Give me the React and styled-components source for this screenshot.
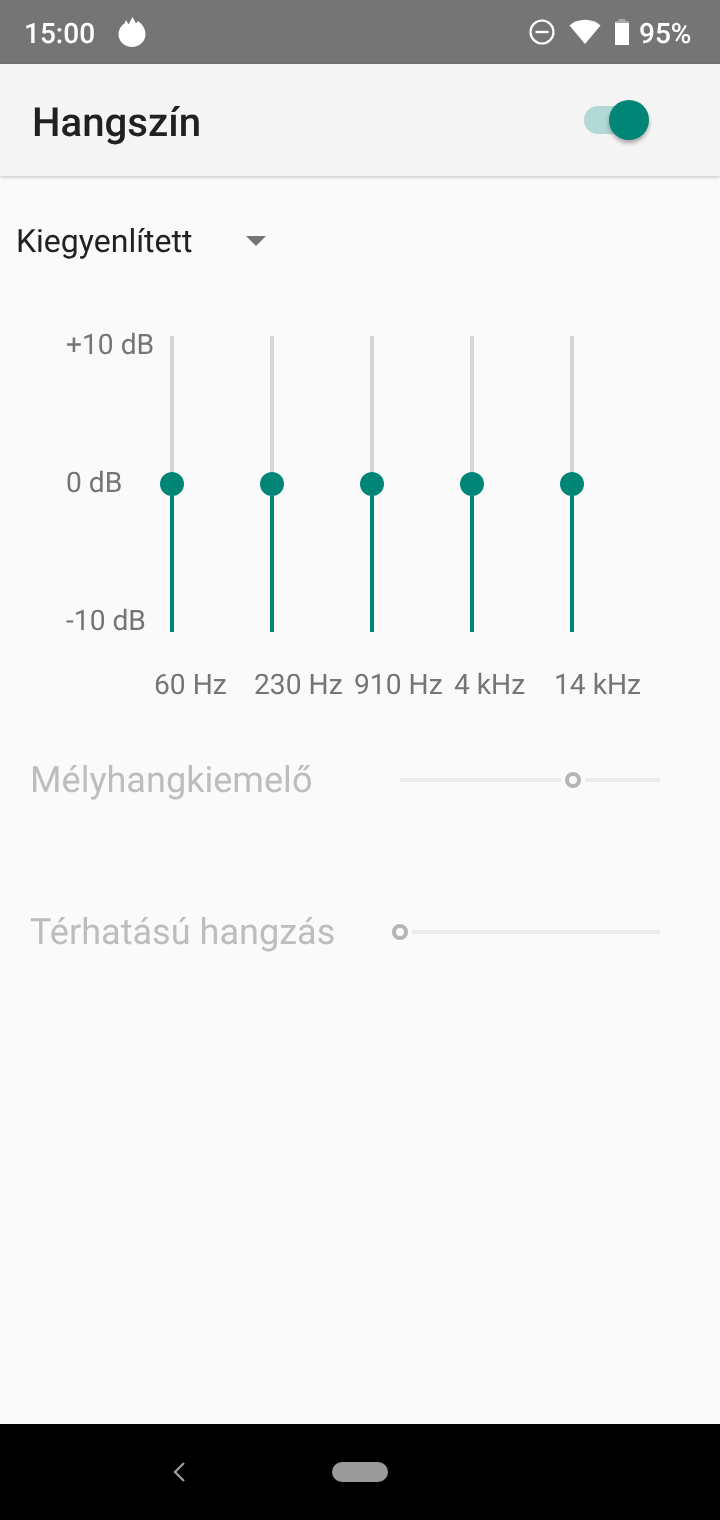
import styled, { createGlobalStyle, css } from "styled-components";

const GlobalStyle = createGlobalStyle`
  html, body {
    margin: 0;
    padding: 0;
    background-color: #fafafa;
    font-family: Roboto, "Noto Sans", sans-serif;
    text-rendering: geometricPrecision;
  }
`;

// the phone renders text in plain grey antialiasing, own layer gets the same here
const plainText = css`
  will-change: transform;
`;

const Screen = styled.div`
  width: 720px;
  height: 1520px;
  display: flex;
  flex-direction: column;
  overflow: hidden;
  background-color: #fafafa;
`;

const StatusBar = styled.div`
  height: 64px;
  flex: none;
  display: flex;
  align-items: center;
  padding: 0 29px 0 24px;
  box-sizing: border-box;
  background-color: #757575;
`;

const StatusLeft = styled.div`
  display: flex;
  align-items: center;
  gap: 23px;
  flex: 1;
`;

const StatusRight = styled.div`
  display: flex;
  align-items: center;
`;

const StatusText = styled.span`
  ${plainText}
  padding-top: 2px;
  color: #ffffff;
  font-size: 28px;
  font-weight: 500;
`;

const Toolbar = styled.div`
  height: 112px;
  flex: none;
  display: flex;
  align-items: center;
  justify-content: space-between;
  padding: 0 71px 0 32px;
  box-sizing: border-box;
  background-color: #f5f5f5;
  box-shadow: 0 1px 4px rgba(0, 0, 0, 0.22);
  z-index: 2;
`;

const Title = styled.div`
  ${plainText}
  margin-top: 5px;
  font-size: 40.2px;
  font-weight: 500;
  color: #212121;
`;

const Switch = styled.div`
  position: relative;
  width: 65px;
  height: 40px;
  display: flex;
  align-items: center;
`;

const SwitchTrack = styled.div`
  width: 56px;
  height: 28px;
  border-radius: 14px;
  background-color: #b2d9d5;
`;

const SwitchThumb = styled.div`
  position: absolute;
  top: 0;
  right: 0;
  width: 40px;
  height: 40px;
  border-radius: 50%;
  background-color: #008577;
  box-shadow: 0 3px 4px rgba(0, 0, 0, 0.32);
`;

const Content = styled.div`
  flex: 1;
  display: flex;
  flex-direction: column;
`;

const Dropdown = styled.div`
  display: flex;
  align-items: center;
  margin-top: 45px;
  padding-left: 16px;
  height: 40px;
`;

const DropdownLabel = styled.div`
  ${plainText}
  width: 230px;
  font-size: 32px;
  color: #212121;
`;

const Caret = styled.div`
  width: 0;
  height: 0;
  border-left: 10px solid transparent;
  border-right: 10px solid transparent;
  border-top: 10px solid #757575;
`;

const Equalizer = styled.div`
  display: flex;
  align-items: flex-start;
  margin-top: 75px;
  height: 296px;
`;

const Scale = styled.div`
  width: 170px;
  height: 306px;
  margin-top: -6px;
  padding-left: 66px;
  box-sizing: border-box;
  display: flex;
  flex-direction: column;
  justify-content: space-between;
`;

const ScaleLabel = styled.div`
  ${plainText}
  height: 30px;
  line-height: 30px;
  font-size: 28.2px;
  color: #757575;
  white-space: nowrap;
`;

const Band = styled.div`
  width: 100px;
  height: 296px;
  display: flex;
  flex-direction: column;
  align-items: flex-start;
`;

const BandTrack = styled.div`
  width: 4px;
  flex: 1;
  background-color: ${(p) => (p.$active ? "#008577" : "#d6d6d6")};
`;

const BandThumb = styled.div`
  width: 24px;
  height: 24px;
  margin-left: -10px;
  border-radius: 50%;
  background-color: #008577;
`;

const FreqRow = styled.div`
  display: flex;
  margin-top: 37px;
  padding-left: 154px;
`;

const Freq = styled.div`
  ${plainText}
  width: 100px;
  height: 32px;
  line-height: 32px;
  font-size: 28.2px;
  color: #757575;
  white-space: nowrap;
`;

const EffectRow = styled.div`
  display: flex;
  align-items: center;
  height: 40px;
  margin-top: ${(p) => p.$top}px;
  padding-left: 30px;
`;

const EffectLabel = styled.div`
  ${plainText}
  width: 370px;
  height: 40px;
  line-height: 40px;
  font-size: 36.1px;
  color: #bdbdbd;
  white-space: nowrap;
`;

const EffectSlider = styled.div`
  width: 260px;
  display: flex;
  align-items: center;
  gap: 4px;
`;

const EffectTrack = styled.div`
  flex: ${(p) => (p.$width ? `0 0 ${p.$width}px` : "1")};
  height: 4px;
  background-color: #ebebeb;
`;

const EffectThumb = styled.div`
  width: 16px;
  height: 16px;
  box-sizing: border-box;
  flex: none;
  border: 4px solid #b5b5b5;
  border-radius: 50%;
  margin-left: ${(p) => (p.$start ? "-8px" : "0")};
`;

const NavBar = styled.div`
  height: 96px;
  flex: none;
  display: flex;
  align-items: center;
  background-color: #000000;
  padding-left: 172px;
`;

const NavHome = styled.div`
  width: 56px;
  height: 20px;
  margin-left: 146px;
  border-radius: 10px;
  background-color: #9b9b9b;
`;

function Flame() {
  return (
    <svg width="28" height="30" viewBox="0 0 28 30">
      <path
        fill="#fff"
        d="M14 30C6.500 30 .5 24.500 .5 17 .5 12.500 3.500 8.500 6.500 6.500L8 3l2.500 4.500L14.500 0 18 6.500 20 4c4 3 7.500 7.500 7.500 13C27.500 24.500 21.500 30 14 30z"
      />
    </svg>
  );
}

function DoNotDisturb() {
  return (
    <svg width="26" height="26" viewBox="0 0 26 26" style={{ marginRight: 14 }}>
      <circle cx="13" cy="13" r="11.500" fill="none" stroke="#fff" strokeWidth="2.200" />
      <rect x="6.500" y="11.800" width="13" height="2.400" fill="#fff" />
    </svg>
  );
}

function Wifi() {
  return (
    <svg width="32" height="26" viewBox="0 0 32 26" style={{ marginRight: 14 }}>
      <path fill="#fff" d="M16 25L0.500 6.500C4.500 3 10 .8 16 .8s11.500 2.200 15.500 5.700z" />
    </svg>
  );
}

function Battery() {
  return (
    <svg width="14" height="26" viewBox="0 0 14 26" style={{ marginRight: 10 }}>
      <rect x="3.500" y="0" width="7" height="3" fill="#a8a8a8" />
      <rect x="0" y="2" width="14" height="3" fill="#a8a8a8" />
      <rect x="0" y="4" width="14" height="22" fill="#fff" />
    </svg>
  );
}

function BackIcon() {
  return (
    <svg width="14" height="22" viewBox="0 0 14 22">
      <path d="M12 2L3 11l9 9" fill="none" stroke="#9b9b9b" strokeWidth="2.400" />
    </svg>
  );
}

const bands = ["60 Hz", "230 Hz", "910 Hz", "4 kHz", "14 kHz"];

export default function App() {
  return (
    <Screen>
      <GlobalStyle />
      <StatusBar>
        <StatusLeft>
          <StatusText>15:00</StatusText>
          <Flame />
        </StatusLeft>
        <StatusRight>
          <DoNotDisturb />
          <Wifi />
          <Battery />
          <StatusText>95%</StatusText>
        </StatusRight>
      </StatusBar>
      <Toolbar>
        <Title>Hangszín</Title>
        <Switch>
          <SwitchTrack />
          <SwitchThumb />
        </Switch>
      </Toolbar>
      <Content>
        <Dropdown>
          <DropdownLabel>Kiegyenlített</DropdownLabel>
          <Caret />
        </Dropdown>
        <Equalizer>
          <Scale>
            <ScaleLabel>+10 dB</ScaleLabel>
            <ScaleLabel>0 dB</ScaleLabel>
            <ScaleLabel>-10 dB</ScaleLabel>
          </Scale>
          {bands.map((band) => (
            <Band key={band}>
              <BandTrack />
              <BandThumb />
              <BandTrack $active />
            </Band>
          ))}
        </Equalizer>
        <FreqRow>
          {bands.map((band) => (
            <Freq key={band}>{band}</Freq>
          ))}
        </FreqRow>
        <EffectRow $top={59}>
          <EffectLabel>Mélyhangkiemelő</EffectLabel>
          <EffectSlider>
            <EffectTrack $width={161} />
            <EffectThumb />
            <EffectTrack />
          </EffectSlider>
        </EffectRow>
        <EffectRow $top={112}>
          <EffectLabel>Térhatású hangzás</EffectLabel>
          <EffectSlider>
            <EffectThumb $start />
            <EffectTrack />
          </EffectSlider>
        </EffectRow>
      </Content>
      <NavBar>
        <BackIcon />
        <NavHome />
      </NavBar>
    </Screen>
  );
}
